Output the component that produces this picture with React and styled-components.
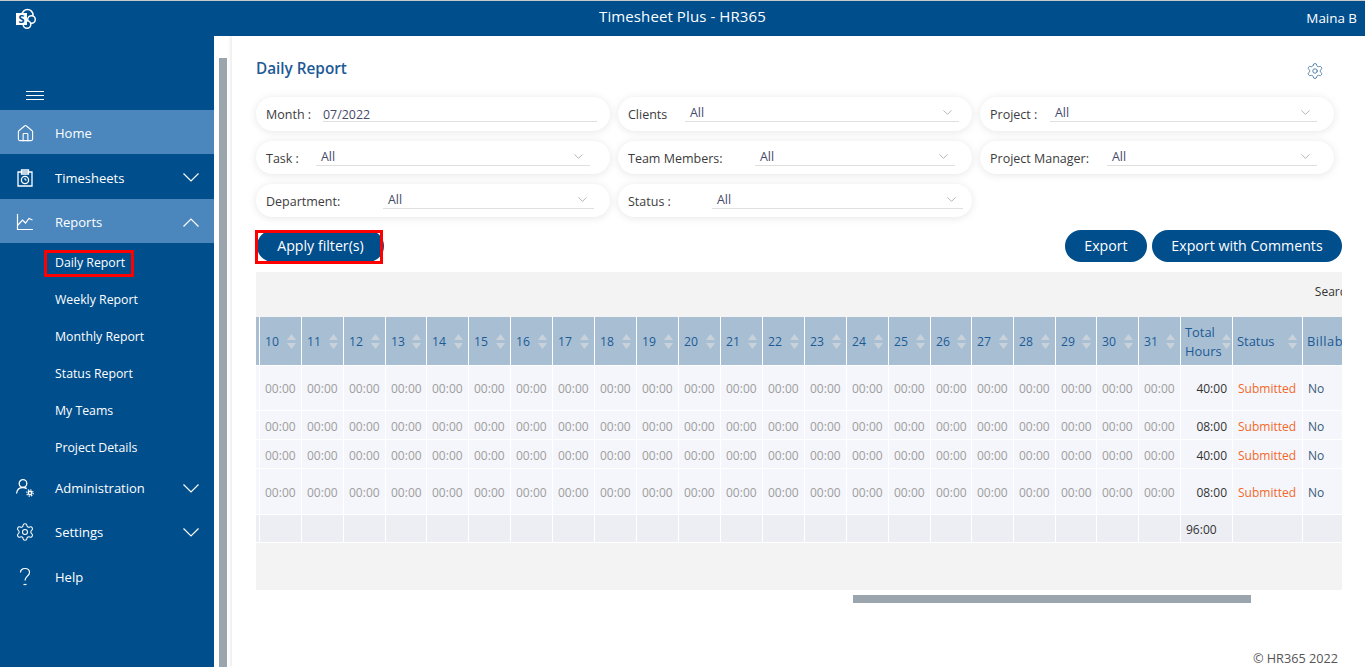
import React from 'react';
import styled, { createGlobalStyle } from 'styled-components';
import { Home, Settings, ChevronDown } from 'lucide-react';

const GlobalStyle = createGlobalStyle`
  html, body {
    margin: 0;
    padding: 0;
    background: #fff;
    font-family: "Open Sans", "Liberation Sans", sans-serif;
    overflow: hidden;
  }
  *, *::after { box-sizing: border-box; }
`;

const Page = styled.div`
  display: flex;
  flex-direction: column;
  height: 667px;
  overflow: hidden;
`;

const Header = styled.header`
  display: grid;
  grid-template-columns: 1fr auto 1fr;
  align-items: center;
  height: 36px;
  flex: none;
  padding: 0 8px;
  background: #004e8c;
  border-top: 1px solid #c8c8c8;
  color: #fff;
`;

const LogoWrap = styled.div`
  display: flex;
  padding-left: 7px;
`;

const AppTitle = styled.div`
  font-size: 15px;
  letter-spacing: 0.1px;
  margin-top: -5px;
`;

const UserName = styled.div`
  font-size: 13.4px;
  justify-self: end;
  margin-top: -2px;
`;

const Body = styled.div`
  display: flex;
  flex: 1;
  min-height: 0;
`;

const Sidebar = styled.nav`
  width: 214px;
  flex: none;
  padding-top: 54px;
  background: #004e8c;
  color: #fff;
`;

const MenuButton = styled.div`
  display: flex;
  flex-direction: column;
  gap: 3px;
  width: 18px;
  height: 20px;
  margin-left: 26px;
  padding-top: 1px;
  & > span {
    height: 1px;
    background: #fff;
  }
`;

const NavRow = styled.div`
  display: grid;
  grid-template-columns: 55px 1fr 16px;
  align-items: center;
  height: ${(p) => p.$height || 44}px;
  padding-right: 15px;
  padding-top: ${(p) => (p.$nudge ? 2 : 0)}px;
  font-size: 13px;
  background: ${(p) => (p.$active ? '#4b87bd' : 'transparent')};
`;

const NavIcon = styled.span`
  display: flex;
  justify-content: center;
  padding-right: 5px;
`;

const SubList = styled.ul`
  list-style: none;
  margin: 0;
  padding: 1px 0 0 55px;
`;

const SubItem = styled.li`
  display: flex;
  align-items: center;
  height: 37px;
  font-size: 12.3px;
`;

const SubLabel = styled.span`
  ${(p) =>
    p.$marked &&
    `
    margin: 2px 0 0 -11px;
    padding: 1px 6px 2px 8px;
    border: 3px solid #f00;
    line-height: 18px;
  `}
`;

const Gutter = styled.div`
  width: 18px;
  flex: none;
  padding: 22px 5px 0;
`;

const GutterThumb = styled.div`
  height: 100%;
  background: #9aa5ae;
`;

const Main = styled.main`
  position: relative;
  flex: 1;
  min-width: 0;
  padding: 0 23px 0 24px;
  box-shadow: -2px 0 3px rgba(0, 0, 0, 0.07);
`;

const TitleRow = styled.div`
  display: flex;
  justify-content: space-between;
  align-items: center;
  height: 61px;
  padding-right: 18px;
`;

const PageTitle = styled.h1`
  margin: 3px 0 0;
  font-size: 15.3px;
  font-weight: 600;
  color: #1c5a96;
`;

const PageGear = styled(Settings)`
  margin-top: 9px;
  color: #2a5f97;
`;

const Filters = styled.div`
  display: grid;
  grid-template-columns: repeat(3, 354px);
  grid-template-rows: 34px 33px 33px;
  column-gap: 8px;
  row-gap: 10px;
  width: 1078px;
`;

const Pill = styled.div`
  display: flex;
  align-items: flex-start;
  padding-left: 10px;
  padding-right: ${(p) => p.$inset}px;
  border-radius: 17px;
  background: #fff;
  box-shadow: 0 1px 8px rgba(0, 0, 0, 0.1);
`;

const PillLabel = styled.label`
  flex: none;
  width: ${(p) => p.$width}px;
  margin-top: 9px;
  font-size: 12.5px;
  font-weight: 500;
  line-height: 18px;
  color: #3c3c3c;
`;

const PillField = styled.div`
  display: flex;
  justify-content: space-between;
  flex: 1;
  height: 25px;
  padding: ${(p) => (p.$text ? '9px 0 0 0' : '7px 4px 0 5px')};
  border-bottom: 1px solid #dfdfdf;
  font-size: 12.4px;
  line-height: ${(p) => (p.$text ? 17 : 18)}px;
  color: #464a6a;
`;

const FieldCaret = styled(ChevronDown)`
  margin-top: 1px;
  color: #8a8a8a;
`;

const Actions = styled.div`
  display: flex;
  justify-content: space-between;
  height: 32px;
  margin-top: 13px;
`;

const ActionGroup = styled.div`
  display: flex;
  gap: 5px;
`;

const PrimaryButton = styled.button`
  position: relative;
  height: 32px;
  width: ${(p) => p.$width}px;
  padding: 0 0 2px;
  border: 0;
  border-radius: 16px;
  background: #004e8c;
  color: #fff;
  font: inherit;
  font-size: 14.2px;
  ${(p) =>
    p.$marked &&
    `
    margin-left: 1px;
    &::after {
      content: '';
      position: absolute;
      left: -2px;
      top: 0;
      width: 128px;
      height: 34px;
      border: 3px solid #f00;
    }
  `}
`;

const Panel = styled.section`
  margin-top: 10px;
  padding-bottom: 47px;
  background: #f3f3f3;
  overflow: hidden;
`;

const PanelTools = styled.div`
  display: flex;
  justify-content: flex-end;
  align-items: center;
  height: 45px;
  padding-bottom: 7px;
`;

const SearchLabel = styled.span`
  margin-right: -14px;
  font-size: 12px;
  color: #333;
`;

const Table = styled.table`
  table-layout: fixed;
  width: ${(p) => p.$width}px;
  border-collapse: separate;
  border-spacing: 0;
`;

const Col = styled.col`
  width: ${(p) => p.$width}px;
`;

const HeadCell = styled.th`
  height: 49px;
  padding: 0 5px 0 ${(p) => (p.$wide ? 4 : 5)}px;
  border-right: 1px solid #fff;
  border-bottom: 1px solid #fff;
  background: #a8bfd3;
  color: #1c5a96;
  font-size: ${(p) => (p.$wide ? 12.9 : 12.2)}px;
  font-weight: 400;
  line-height: 19px;
  letter-spacing: ${(p) => (p.$spaced ? 0.5 : 0)}px;
  text-align: left;
`;

const HeadInner = styled.div`
  display: flex;
  justify-content: space-between;
  align-items: center;
`;

const TotalLabel = styled.span`
  padding-top: 2px;
`;

const SortIcon = styled.svg`
  flex: none;
  width: 9px;
  height: 15px;
  fill: #c9d2da;
`;

const Row = styled.tr`
  height: ${(p) => p.$height}px;
  & > td {
    padding-top: ${(p) => (p.$nudge ? 2 : 0)}px;
  }
`;

const Cell = styled.td`
  padding: 0 5px;
  border-right: 1px solid #fff;
  border-bottom: 1px solid #fff;
  background: ${(p) => (p.$total ? '#eceef3' : '#f4f6fb')};
  color: ${(p) => p.$color || '#a09c9c'};
  font-size: 12px;
  text-align: ${(p) => p.$align || 'left'};
  white-space: nowrap;
  overflow: hidden;
`;

const ScrollThumb = styled.div`
  height: 8px;
  margin: 5px 0 0 597px;
  width: 398px;
  background: #9aa5ae;
`;

const Copyright = styled.div`
  position: absolute;
  right: 27px;
  bottom: 0;
  font-size: 12.7px;
  color: #555;
`;

function LogoIcon() {
  return (
    <svg width="22" height="22" viewBox="0 0 22 22">
      <circle cx="12.5" cy="7" r="5.5" fill="none" stroke="#fff" strokeWidth="1.5" />
      <circle cx="16.5" cy="11.5" r="3.8" fill="#004e8c" stroke="#fff" strokeWidth="1.5" />
      <circle cx="12" cy="16.5" r="3.8" fill="#004e8c" stroke="#fff" strokeWidth="1.5" />
      <rect x="1" y="5" width="11" height="12" fill="#fff" />
      <text x="6.5" y="15" textAnchor="middle" fontSize="11" fontWeight="700" fill="#004e8c" fontFamily="Open Sans">S</text>
    </svg>
  );
}

function TimesheetIcon() {
  return (
    <svg width="18" height="18" viewBox="0 0 18 18" fill="none" stroke="#fff" strokeWidth="1.3">
      <path d="M2 3h14v14H2z" />
      <path d="M5.5 3V1h7v4h-7z" />
      <circle cx="9" cy="11" r="3.6" />
      <path d="M9 9v2h1.6" strokeWidth="1" />
    </svg>
  );
}

function ChartIcon() {
  return (
    <svg width="18" height="18" viewBox="0 0 18 18" fill="none" stroke="#fff" strokeWidth="1.2">
      <path d="M1.5 1v15.5H17" />
      <path d="M2 12l4.5-5 3 3 3.5-4.5 3.5 1.5" />
    </svg>
  );
}

function AdminIcon() {
  return (
    <svg width="20" height="20" viewBox="0 0 20 20" fill="none" stroke="#fff" strokeWidth="1.3">
      <circle cx="8" cy="5.5" r="3.8" />
      <path d="M1.5 15.5c.4-3.6 3-6 6.5-6 1.5 0 2.7.4 3.7 1.1" />
      <circle cx="15" cy="15" r="1.7" strokeWidth="1.5" />
      <circle cx="15" cy="15" r="3.2" strokeWidth="1.2" strokeDasharray="1.3 1.2" />
    </svg>
  );
}

function HelpIcon() {
  return (
    <svg width="18" height="20" viewBox="0 0 18 20" fill="none" stroke="#fff" strokeWidth="1.2">
      <path d="M4.5 5.5C4.5 3 6.5 1.5 9 1.5s4.5 1.6 4.5 4c0 3.6-4.5 3.8-4.5 8" />
      <path d="M7.5 17.5h3" />
    </svg>
  );
}

function Caret({ up }) {
  return (
    <svg width="16" height="9" viewBox="0 0 16 9" fill="none" stroke="#fff" strokeWidth="1.2">
      <path d={up ? 'M.5 8.5L8 1l7.5 7.5' : 'M.5.5L8 8 15.5.5'} />
    </svg>
  );
}

function SortArrows() {
  return (
    <SortIcon viewBox="0 0 9 15">
      <path d="M4.5 0L9 6H0z" />
      <path d="M0 9h9l-4.5 6z" />
    </SortIcon>
  );
}

const subLinks = ['Daily Report', 'Weekly Report', 'Monthly Report', 'Status Report', 'My Teams', 'Project Details'];

const filterRows = [
  { label: 'Month :', width: 57, inset: 13, value: '07/2022', text: true },
  { label: 'Clients', width: 57, inset: 13, value: 'All' },
  { label: 'Project :', width: 60, inset: 17, value: 'All' },
  { label: 'Task :', width: 50, inset: 20, value: 'All' },
  { label: 'Team Members:', width: 127, inset: 17, value: 'All' },
  { label: 'Project Manager:', width: 117, inset: 17, value: 'All' },
  { label: 'Department:', width: 117, inset: 16, value: 'All' },
  { label: 'Status :', width: 84, inset: 9, value: 'All' },
];

const days = Array.from({ length: 22 }, (_, i) => i + 10);
const narrowDays = [13, 26, 29];
const dayWidth = (d) => (narrowDays.includes(d) ? 41 : 42);

const rows = [
  { height: 45, total: '40:00' },
  { height: 29, total: '08:00', nudge: true },
  { height: 29, total: '40:00', nudge: true },
  { height: 46, total: '08:00', nudge: true },
];

export default function App() {
  const tableWidth = 4 + days.reduce((sum, d) => sum + dayWidth(d), 0) + 52 + 70 + 60;

  return (
    <Page>
      <GlobalStyle />
      <Header>
        <LogoWrap>
          <LogoIcon />
        </LogoWrap>
        <AppTitle>Timesheet Plus - HR365</AppTitle>
        <UserName>Maina B</UserName>
      </Header>
      <Body>
        <Sidebar>
          <MenuButton>
            <span />
            <span />
            <span />
          </MenuButton>
          <NavRow $active $nudge>
            <NavIcon><Home size={19} strokeWidth={1.4} /></NavIcon>
            Home
          </NavRow>
          <NavRow $height={45} $nudge>
            <NavIcon><TimesheetIcon /></NavIcon>
            Timesheets
            <Caret />
          </NavRow>
          <NavRow $active $nudge>
            <NavIcon><ChartIcon /></NavIcon>
            Reports
            <Caret up />
          </NavRow>
          <SubList>
            {subLinks.map((link, i) => (
              <SubItem key={link}>
                <SubLabel $marked={i === 0}>{link}</SubLabel>
              </SubItem>
            ))}
          </SubList>
          <NavRow>
            <NavIcon><AdminIcon /></NavIcon>
            Administration
            <Caret />
          </NavRow>
          <NavRow>
            <NavIcon><Settings size={20} strokeWidth={1.3} /></NavIcon>
            Settings
            <Caret />
          </NavRow>
          <NavRow $height={45}>
            <NavIcon><HelpIcon /></NavIcon>
            Help
          </NavRow>
        </Sidebar>
        <Gutter>
          <GutterThumb />
        </Gutter>
        <Main>
          <TitleRow>
            <PageTitle>Daily Report</PageTitle>
            <PageGear size={18} strokeWidth={1} />
          </TitleRow>
          <Filters>
            {filterRows.map((f) => (
              <Pill key={f.label} $inset={f.inset}>
                <PillLabel $width={f.width}>{f.label}</PillLabel>
                <PillField $text={f.text}>
                  {f.value}
                  {!f.text && <FieldCaret size={15} strokeWidth={1} />}
                </PillField>
              </Pill>
            ))}
          </Filters>
          <Actions>
            <PrimaryButton $marked $width={127}>Apply filter(s)</PrimaryButton>
            <ActionGroup>
              <PrimaryButton $width={82}>Export</PrimaryButton>
              <PrimaryButton $width={190}>Export with Comments</PrimaryButton>
            </ActionGroup>
          </Actions>
          <Panel>
            <PanelTools>
              <SearchLabel>Search:</SearchLabel>
            </PanelTools>
            <Table $width={tableWidth}>
              <colgroup>
                <Col $width={4} />
                {days.map((d) => (
                  <Col key={d} $width={dayWidth(d)} />
                ))}
                <Col $width={52} />
                <Col $width={70} />
                <Col $width={60} />
              </colgroup>
              <thead>
                <tr>
                  <HeadCell />
                  {days.map((d) => (
                    <HeadCell key={d}>
                      <HeadInner>
                        {d}
                        <SortArrows />
                      </HeadInner>
                    </HeadCell>
                  ))}
                  <HeadCell $wide>
                    <HeadInner>
                      <TotalLabel>Total Hours</TotalLabel>
                      <SortArrows />
                    </HeadInner>
                  </HeadCell>
                  <HeadCell $wide>
                    <HeadInner>
                      Status
                      <SortArrows />
                    </HeadInner>
                  </HeadCell>
                  <HeadCell $wide $spaced>Billable</HeadCell>
                </tr>
              </thead>
              <tbody>
                {rows.map((row, i) => (
                  <Row key={i} $height={row.height} $nudge={row.nudge}>
                    <Cell />
                    {days.map((d) => (
                      <Cell key={d}>00:00</Cell>
                    ))}
                    <Cell $align="right" $color="#333">{row.total}</Cell>
                    <Cell $color="#f2682a">Submitted</Cell>
                    <Cell $color="#3a5a78">No</Cell>
                  </Row>
                ))}
                <Row $height={28} $nudge>
                  <Cell $total />
                  {days.map((d) => (
                    <Cell $total key={d} />
                  ))}
                  <Cell $total $color="#333">96:00</Cell>
                  <Cell $total />
                  <Cell $total />
                </Row>
              </tbody>
            </Table>
          </Panel>
          <ScrollThumb />
          <Copyright>© HR365 2022</Copyright>
        </Main>
      </Body>
    </Page>
  );
}
